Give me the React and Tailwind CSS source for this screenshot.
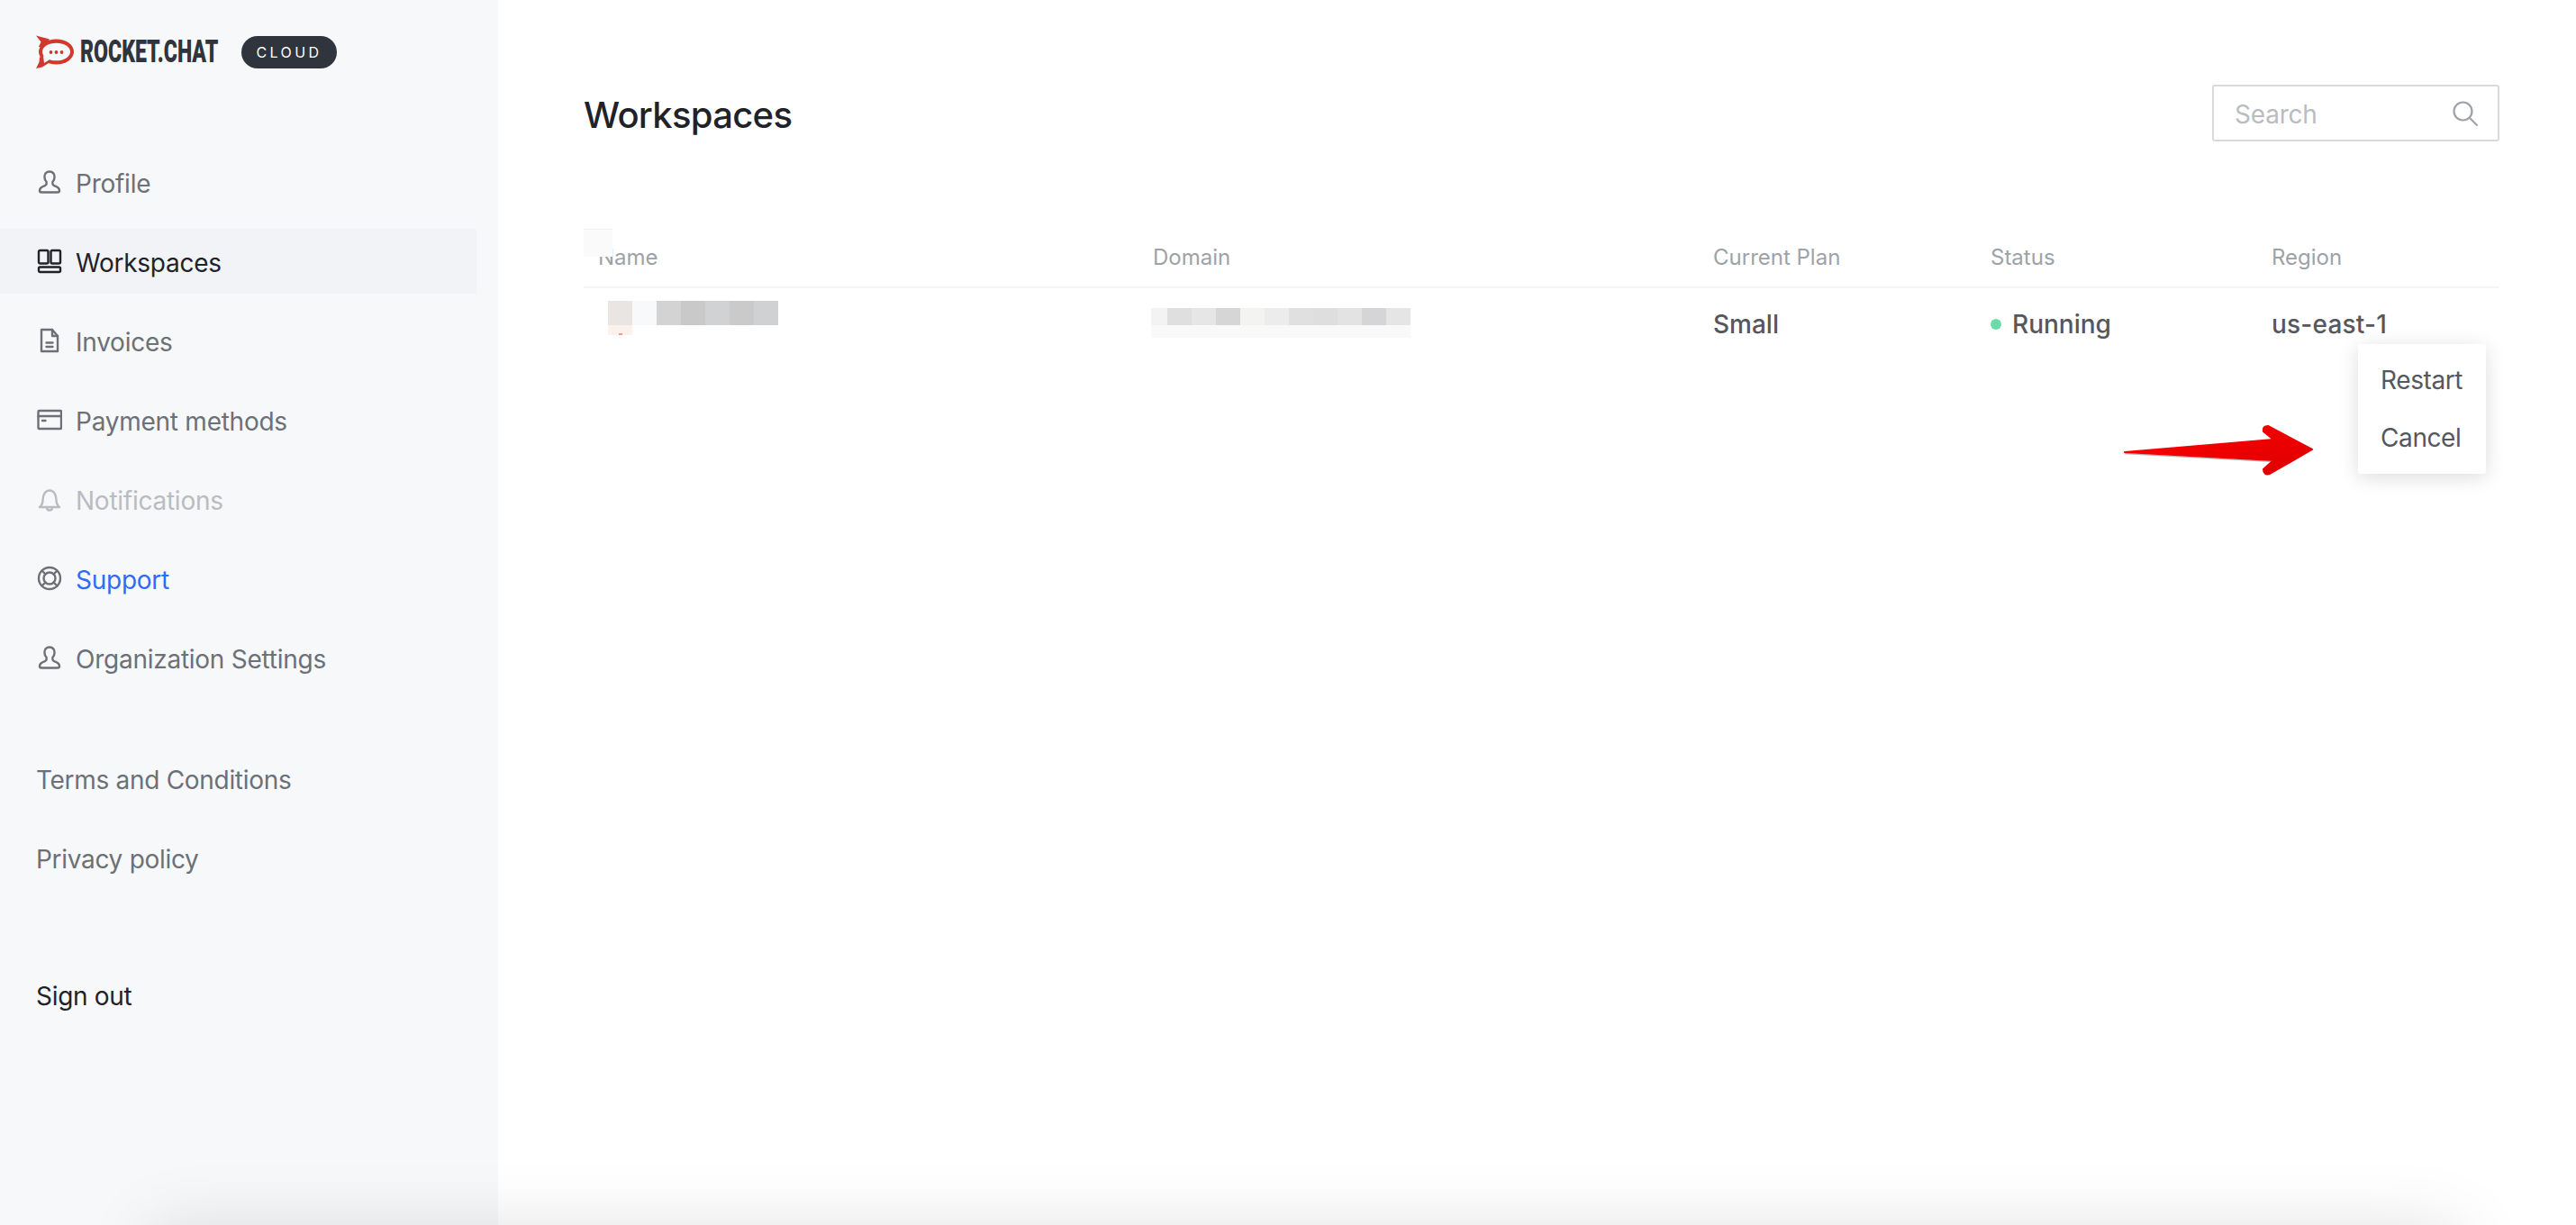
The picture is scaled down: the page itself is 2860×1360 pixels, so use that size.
import React from 'react';

const font = { fontFamily: 'Inter, "Liberation Sans", sans-serif' };

const Logo = () => (
  <div className="flex items-center shrink-0 h-[38px]">
    <svg width="42" height="38" viewBox="0 0 42 38" className="shrink-0">
      <path d="M0 0.5 L15 4.5 L8 14 L3 13 L5.5 7.5 Z" fill="#cf3a2c" />
      <path d="M0 37 L3.5 30 L4 24 L14 31 L7 35.500 Z" fill="#cf3a2c" />
      <ellipse cx="22.500" cy="18.500" rx="19.500" ry="14" fill="#cf3a2c" />
      <ellipse cx="22.500" cy="18.500" rx="15.500" ry="9.800" fill="#f7f8fa" />
      <path d="M8 23 L9 31 L16 26.500 Z" fill="#f7f8fa" />
      <circle cx="16.500" cy="19" r="1.900" fill="#cf3a2c" />
      <circle cx="22.500" cy="19" r="1.900" fill="#cf3a2c" />
      <circle cx="28.500" cy="19" r="1.900" fill="#cf3a2c" />
    </svg>
    <div className="w-[155px] ml-[7px] overflow-visible">
      <span className="inline-block origin-left scale-x-[0.66] whitespace-nowrap text-[35px] leading-[38px] font-black text-[#2f343d] [font-family:Roboto,sans-serif]">
        ROCKET.CHAT
      </span>
    </div>
  </div>
);

const Icon = ({ children }) => (
  <svg
    width="28"
    height="28"
    viewBox="0 0 28 28"
    fill="none"
    stroke="currentColor"
    strokeWidth="2.400"
    strokeLinecap="round"
    strokeLinejoin="round"
    className="shrink-0"
  >
    {children}
  </svg>
);

const PersonPath = () => (
  <path d="M14 2.500c-3.400 0-5.600 2.500-5.600 5.800 0 2.600 1 4.400 2.200 5.600v2c0 1.200-1.200 2-3 2.800-2.400 1-4.600 2.200-4.600 4.800 0 1.400 1 2 2.200 2h17.600c1.200 0 2.200-.6 2.200-2 0-2.600-2.200-3.800-4.600-4.800-1.800-.8-3-1.600-3-2.800v-2c1.200-1.200 2.200-3 2.200-5.600 0-3.300-2.200-5.800-5.600-5.800z" />
);

const icons = {
  profile: <PersonPath />,
  workspaces: (
    <>
      <rect x="2" y="2" width="10.500" height="14.500" rx="1.500" />
      <rect x="15.500" y="2" width="10.500" height="14.500" rx="1.500" />
      <rect x="2" y="20.500" width="24" height="5.500" rx="1.500" />
    </>
  ),
  invoices: (
    <>
      <path d="M5 2h12l6 7v17H5z" />
      <path d="M17 2v7h6M10.500 16.500h7M10.500 21h7" />
    </>
  ),
  payment: (
    <>
      <rect x="1.500" y="4" width="25.500" height="20" rx="1" />
      <path d="M1.500 10h25.500M6 15h3.500" />
    </>
  ),
  bell: (
    <>
      <path d="M3 23c2.500-2 3.500-4 3.500-8 0-6 3-10.500 7.500-10.500S21.500 9 21.500 15c0 4 1 6 3.500 8z" />
      <path d="M11 23.500c0 2.200 1.300 3 3 3s3-.8 3-3" />
    </>
  ),
  support: (
    <>
      <circle cx="14" cy="14" r="12" />
      <circle cx="14" cy="14" r="6.500" />
      <path d="M9.500 9.500 5.500 5.500M18.500 9.500l4-4M9.500 18.500l-4 4M18.500 18.500l4 4" />
    </>
  ),
};

const navItems = [
  { label: 'Profile', icon: 'profile', text: 'text-[#6c7077]', tint: 'text-[#6c7077]' },
  { label: 'Workspaces', icon: 'workspaces', text: 'text-[#1f2329]', tint: 'text-[#1f2329]', active: true },
  { label: 'Invoices', icon: 'invoices', text: 'text-[#6c7077]', tint: 'text-[#6c7077]' },
  { label: 'Payment methods', icon: 'payment', text: 'text-[#6c7077]', tint: 'text-[#6c7077]' },
  { label: 'Notifications', icon: 'bell', text: 'text-[#b9bcc1]', tint: 'text-[#b9bcc1]' },
  { label: 'Support', icon: 'support', text: 'text-[#2f6cf6]', tint: 'text-[#6c7077]' },
  { label: 'Organization Settings', icon: 'profile', text: 'text-[#6c7077]', tint: 'text-[#6c7077]' },
];

const nameBlocks = ['#e9e5e2', '#f8f9fb', '#d3d3d3', '#c9c9ca', '#d1d2d4', '#cacacb', '#d0d1d3'];
const domainBlocks = ['#f3f3f3', '#dfdfdf', '#e6e6e6', '#d6d6d6', '#f3f3f1', '#ececec', '#e0e0e0', '#dedede', '#e3e3e3', '#d5d5d8', '#e5e5e5'];

const Sidebar = () => (
  <aside className="w-[553px] h-full shrink-0 bg-[#f7f8fa] flex flex-col">
    <div className="flex items-start pl-[40px] pt-[39px] h-[166px]">
      <Logo />
      <span className="ml-[24px] mt-[1px] w-[106px] h-[36px] rounded-full bg-[#2f343d] text-white text-[16px] tracking-[3.400px] flex items-center justify-center leading-none">
        CLOUD
      </span>
    </div>
    <nav className="flex flex-col gap-4">
      {navItems.map((item) => (
        <a
          key={item.label}
          className={`h-[72px] w-[529px] pl-[41px] flex items-center gap-[15px] text-[28px] tracking-[-0.25px] ${item.text} ${item.active ? 'bg-[#f2f3f6]' : ''}`}
        >
          <span className={item.tint}>
            <Icon>{icons[item.icon]}</Icon>
          </span>
          <span className="pt-[3px]">{item.label}</span>
        </a>
      ))}
    </nav>
    <div className="flex flex-col gap-4 mt-[62px] pl-[40px] text-[28px] tracking-[-0.3px] text-[#6c7077]">
      <a className="h-[72px] pt-[3px] flex items-center">Terms and Conditions</a>
      <a className="h-[72px] pt-[3px] flex items-center">Privacy policy</a>
    </div>
    <a className="mt-[80px] pl-[40px] pt-[3px] h-[72px] flex items-center text-[28px] tracking-[-0.3px] text-[#1f2329]">Sign out</a>
  </aside>
);

const Pixelated = () => (
  <div className="flex flex-col -mt-[14px]">
    <div className="flex h-[27px] ml-[27px]">
      {nameBlocks.map((c, i) => (
        <div key={i} className="w-[27px]" style={{ background: c }} />
      ))}
    </div>
    <div className="w-[27px] h-[11px] ml-[27px] bg-[#fcf1ec] flex justify-center items-end">
      <div className="w-[4px] h-[2px] bg-[#f0a080]" />
    </div>
  </div>
);

const PixelatedDomain = () => (
  <div className="flex flex-col -mt-[4px] -ml-[2px]">
    <div className="flex h-[19px]">
      {domainBlocks.map((c, i) => (
        <div key={i} className={i === 0 ? 'w-[18px]' : 'w-[27px]'} style={{ background: c }} />
      ))}
    </div>
    <div className="h-[14px] w-[288px] bg-[#f9f9f9]" />
  </div>
);

const Main = () => (
  <main className="flex-1 min-w-0 pl-[95px] pr-[85px]">
    <header className="flex justify-between items-start h-[254px] pt-[94px]">
      <h1 className="text-[40px] leading-[68px] font-medium tracking-[-0.7px] text-[#1f2329]">Workspaces</h1>
      <div className="w-[319px] h-[63px] border-2 border-[#d8dadd] rounded-[3px] flex items-center justify-between pl-[23px] pr-[21px]">
        <span className="text-[28px] tracking-[-0.2px] pt-[2px] text-[#b9bcc1]">Search</span>
        <svg width="30" height="30" viewBox="0 0 30 30" fill="none" stroke="#9ea2a8" strokeWidth="2.200" strokeLinecap="round">
          <circle cx="12.500" cy="12.500" r="10" />
          <path d="M20 20l8 8" />
        </svg>
      </div>
    </header>

    <div className="relative">
      <div className="absolute left-0 top-0 w-[32px] h-[31px] bg-[#fafafa] border-t border-[#eeeeee]" />
      <div className="grid grid-cols-[632px_622px_308px_312px_1fr] h-[66px] items-center border-b-2 border-[#f5f5f5] text-[24px] text-[#9ea2a8]">
        <div className="pl-[16px]">Name</div>
        <div>Domain</div>
        <div>Current Plan</div>
        <div>Status</div>
        <div>Region</div>
      </div>
      <div className="grid grid-cols-[632px_622px_308px_312px_1fr] h-[80px] items-center text-[28px] font-medium text-[#54585e]">
        <Pixelated />
        <PixelatedDomain />
        <div>Small</div>
        <div className="flex items-center gap-[12px]">
          <span className="w-[12px] h-[12px] rounded-full bg-[#6cdba8]" />
          Running
        </div>
        <div className="tracking-[0.2px]">us-east-1</div>
      </div>
    </div>

    <div className="absolute left-[2618px] top-[382px] w-[142px] py-2 bg-white rounded-[3px] shadow-[0_4px_22px_rgba(0,0,0,0.14)] text-[28px] tracking-[-0.4px] text-[#54585e]">
      <div className="h-[64px] pl-[25px] flex items-center">Restart</div>
      <div className="h-[64px] pl-[25px] flex items-center">Cancel</div>
    </div>

    <svg className="absolute left-[2355px] top-[468px]" width="217" height="64" viewBox="0 0 217 64">
      <defs>
        <linearGradient id="arrowFill" x1="0" y1="0" x2="1" y2="1">
          <stop offset="0" stopColor="#ff0000" />
          <stop offset="1" stopColor="#dd0000" />
        </linearGradient>
      </defs>
      <path d="M4 35.500 L170 44.500 L4 35.500 Z" fill="none" stroke="#8a8a8a" strokeWidth="1.500" opacity="0.6" />
      <path
        d="M4 34 L169 20 L158 11 Q157 5 163 5 L212 31 L165 58 Q158 60 158 53 L169 43 Z"
        fill="url(#arrowFill)"
        stroke="url(#arrowFill)"
        strokeWidth="2"
        strokeLinejoin="round"
      />
    </svg>
  </main>
);

export default function App() {
  return (
    <div className="relative w-[2860px] h-[1360px] overflow-hidden bg-white flex" style={font}>
      <Sidebar />
      <Main />
      <div className="absolute left-[190px] top-[1385px] w-[2520px] h-[100px] pointer-events-none shadow-[0_0_80px_20px_rgba(0,0,0,0.13)]" />
    </div>
  );
}
